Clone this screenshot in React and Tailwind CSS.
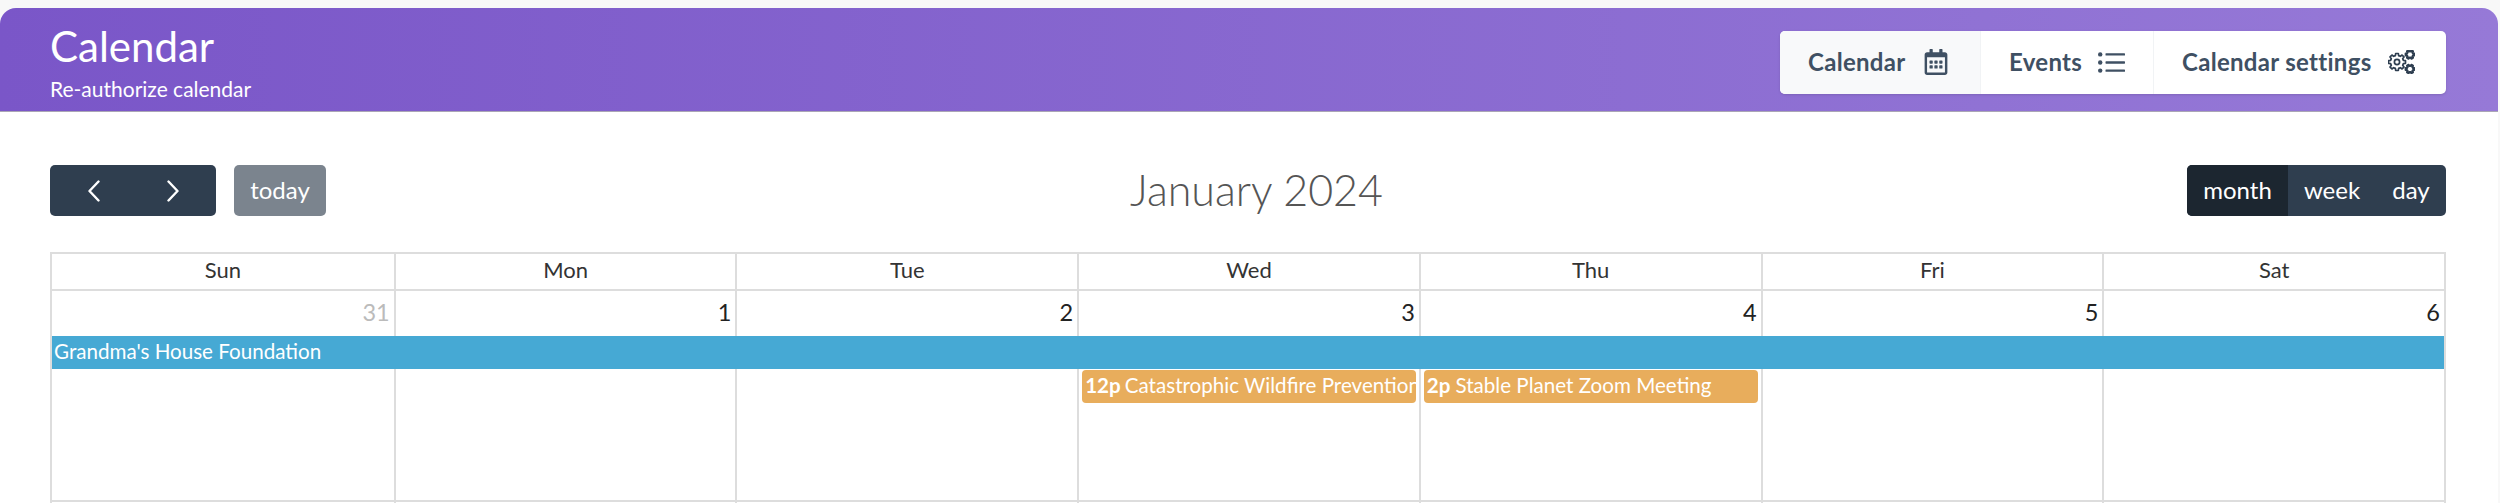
import React from "react";
import { FaRegCalendarAlt } from "react-icons/fa";

function gearPath(cx, cy, rOut, rIn, teeth) {
  const pts = [];
  const step = (Math.PI * 2) / teeth;
  for (let i = 0; i < teeth; i++) {
    const a = i * step;
    const w = step * 0.2;
    const p = (r, t) => `${(cx + r * Math.cos(t)).toFixed(2)} ${(cy + r * Math.sin(t)).toFixed(2)}`;
    pts.push(p(rIn, a - step * 0.32), p(rOut, a - w), p(rOut, a + w), p(rIn, a + step * 0.32));
  }
  return "M" + pts.join("L") + "Z";
}

function GearsIcon() {
  return (
    <svg width="27" height="24" viewBox="0 0 27 24" className="text-[#2e3e50]">
      <path d={gearPath(9, 12, 8.6, 6.6, 8)} fill="none" stroke="currentColor" strokeWidth="1.7" strokeLinejoin="round" />
      <circle cx="9" cy="12" r="2.6" fill="none" stroke="currentColor" strokeWidth="1.7" />
      <path d={gearPath(22, 4.5, 4.4, 3.2, 6)} fill="none" stroke="currentColor" strokeWidth="2.2" strokeLinejoin="round" />
      <path d={gearPath(22, 19, 4.4, 3.2, 6)} fill="none" stroke="currentColor" strokeWidth="2.2" strokeLinejoin="round" />
    </svg>
  );
}

function ListIcon() {
  return (
    <svg width="27" height="21" viewBox="0 0 27 21" fill="#3f5063">
      <circle cx="2.2" cy="2.4" r="2.2" />
      <circle cx="2.2" cy="10.5" r="2.2" />
      <circle cx="2.2" cy="18.6" r="2.2" />
      <rect x="7.5" y="1.2" width="19.5" height="2.4" rx="0.6" />
      <rect x="7.5" y="9.3" width="19.5" height="2.4" rx="0.6" />
      <rect x="7.5" y="17.4" width="19.5" height="2.4" rx="0.6" />
    </svg>
  );
}

function Chevron({ dir }) {
  return (
    <svg width="14" height="22" viewBox="0 0 14 22" fill="none" stroke="white" strokeWidth="2.4" strokeLinecap="round" strokeLinejoin="round">
      <path d={dir === "left" ? "M11.5 1.5 L2.5 11 L11.5 20.5" : "M2.5 1.5 L11.5 11 L2.5 20.5"} />
    </svg>
  );
}

const days = ["Sun", "Mon", "Tue", "Wed", "Thu", "Fri", "Sat"];
const dates = ["31", "1", "2", "3", "4", "5", "6"];

function Tab({ label, icon, className }) {
  return (
    <div className={`flex h-full items-center justify-start pl-[28px] pb-[1px] font-bold tracking-[0.3px] text-[#3f5063] text-[24px] ${className}`}>
      <span>{label}</span>
      {icon}
    </div>
  );
}

export default function App() {
  return (
    <div className="h-[503px] w-[2500px] overflow-hidden bg-[#f8f8f8] pt-2 pr-[2px] font-['Lato',sans-serif]">
      <div className="h-[495px] overflow-hidden rounded-t-[16px] bg-white">
        <header className="flex h-[104px] items-start justify-between border-b border-b-[#aaa6b5] bg-gradient-to-r from-[#7a56c8] to-[#9679d7] pr-[52px] pl-[50px]">
          <div className="text-white">
            <div className="mt-[15px] text-[42px] leading-[46px] font-normal">Calendar</div>
            <div className="mt-[8px] text-[21px] leading-[24px]">Re-authorize calendar</div>
          </div>
          <nav className="mt-[23px] flex h-[63px] w-[666px] items-center overflow-hidden rounded-[5px] bg-white shadow-sm">
            <Tab
              label="Calendar"
              className="w-[200px] bg-[#f8f9fa]"
              icon={<FaRegCalendarAlt className="ml-[17px] text-[26px] text-[#3f5063]" />}
            />
            <Tab label="Events" className="w-[173px] border-l border-[#f1f3f5]" icon={<span className="ml-[16px] flex"><ListIcon /></span>} />
            <Tab label="Calendar settings" className="w-[293px] border-l border-[#f1f3f5]" icon={<span className="ml-[16px] flex"><GearsIcon /></span>} />
          </nav>
        </header>

        <main className="pr-[52px] pl-[50px]">
          <div className="mt-[53px] flex h-[51px] items-center justify-between">
            <div className="flex w-[276px] gap-[18px]">
              <div className="flex h-[51px] w-[166px] items-center justify-around rounded-[5px] bg-[#2f3e4f] px-[4px]">
                <Chevron dir="left" />
                <Chevron dir="right" />
              </div>
              <div className="flex h-[51px] w-[92px] items-center justify-center rounded-[5px] bg-[#7b848e] pb-[2px] text-[24px] text-white">today</div>
            </div>
            <h2 className="pb-[2px] text-[43px] leading-none font-light text-[#555]">January 2024</h2>
            <div className="flex h-[51px] w-[259px] overflow-hidden rounded-[5px] bg-[#2f3e4f] pb-0 text-[24px] text-white">
              <div className="flex w-[101px] items-center justify-center bg-[#1c2630] pb-[2px]">month</div>
              <div className="flex w-[88px] items-center justify-center pb-[2px]">week</div>
              <div className="flex w-[70px] items-center justify-center pb-[2px]">day</div>
            </div>
          </div>

          <div className="mt-[36px] border-2 border-[#ddd]">
            <div className="grid h-[35px] grid-cols-7 text-center text-[22px] leading-[32px] text-[#333]">
              {days.map((d, i) => (
                <div key={d} className={i > 0 ? "border-l-2 border-[#ddd]" : ""}>{d}</div>
              ))}
            </div>
            <div className="grid h-[213px] grid-cols-7 grid-rows-[45px_33px_34px_1fr] border-t-2 border-b-2 border-[#ddd] text-[23.5px]">
              {dates.map((d, i) => (
                <div
                  key={d}
                  style={{ gridColumnStart: i + 1 }}
                  className={`row-span-4 row-start-1 pt-[4px] pr-[4px] text-right leading-[34px] ${i > 0 ? "border-l-2 border-[#ddd]" : ""} ${i === 0 ? "text-[#bbb]" : "text-[#222]"}`}
                >
                  {d}
                </div>
              ))}
              <div className="col-span-7 col-start-1 row-start-2 z-10 flex items-center bg-[#46a9d4] pb-[2px] pl-[2px] text-[20.6px] text-white">
                Grandma's House Foundation
              </div>
              <div className="col-start-4 row-start-3 z-10 mt-[1px] mr-[3px] ml-[5px] flex h-[33px] items-center overflow-hidden rounded-[4px] bg-[#e8ad5c] pb-[2px] pl-[3px] text-[20.6px] whitespace-nowrap text-white">
                <b className="mr-[4px] font-bold">12p</b>Catastrophic Wildfire Prevention
              </div>
              <div className="col-start-5 row-start-3 z-10 mt-[1px] mr-[3px] ml-[5px] flex h-[33px] items-center overflow-hidden rounded-[4px] bg-[#e8ad5c] pb-[2px] pl-[3px] text-[20.6px] whitespace-nowrap text-white">
                <b className="mr-[5px] font-bold">2p</b>Stable Planet Zoom Meeting
              </div>
            </div>
            <div className="grid h-[100px] grid-cols-7">
              {days.map((d, i) => (
                <div key={d} className={i > 0 ? "border-l-2 border-[#ddd]" : ""} />
              ))}
            </div>
          </div>
        </main>
      </div>
    </div>
  );
}
